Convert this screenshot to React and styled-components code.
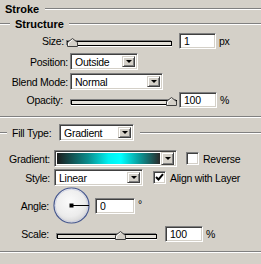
import React from "react";
import styled, { createGlobalStyle } from "styled-components";

const GlobalStyle = createGlobalStyle`
  html, body {
    margin: 0;
    padding: 0;
    background: #d4d0c8;
  }
  body {
    font-family: "Liberation Sans", Arial, sans-serif;
    font-size: 10.5px;
    letter-spacing: -0.25px;
    color: #000;
  }
`;

const Panel = styled.div`
  width: 261px;
  height: 264px;
  background: #d4d0c8;
  overflow: hidden;
  display: flex;
  flex-direction: column;
`;

// etched line used inside a heading row
const Etch = styled.div`
  height: 0;
  border-top: 1px solid #808080;
  border-bottom: 1px solid #ffffff;
  flex: ${(p) => (p.$w ? `0 0 ${p.$w}px` : "1 1 auto")};
  margin-left: ${(p) => p.$ml || 0}px;
`;

const Separator = styled.div`
  height: 0;
  border-top: 1px solid #808080;
  border-bottom: 1px solid #ffffff;
  margin-top: ${(p) => p.$mt || 0}px;
`;

const Heading = styled.div`
  display: flex;
  align-items: center;
  height: ${(p) => p.$h}px;
  padding-left: ${(p) => p.$pl || 0}px;
  flex: none;
`;

const HeadText = styled.span`
  font-weight: bold;
  font-size: 11px;
  letter-spacing: 0;
  margin-left: ${(p) => p.$ml || 0}px;
  white-space: nowrap;
`;

const Row = styled.div`
  display: flex;
  align-items: center;
  height: ${(p) => p.$h || 17}px;
  margin-top: ${(p) => p.$mt || 0}px;
  flex: none;
`;

const Label = styled.span`
  flex: none;
  width: ${(p) => p.$w}px;
  margin-left: ${(p) => p.$ml || 0}px;
  margin-right: ${(p) => p.$gap ?? 3}px;
  text-align: ${(p) => p.$align || "right"};
  white-space: nowrap;
`;

const Unit = styled.span`
  margin-left: ${(p) => p.$ml || 3}px;
  align-self: ${(p) => (p.$top ? "flex-start" : "center")};
  margin-top: ${(p) => (p.$top ? 11 : 0)}px;
  white-space: nowrap;
`;

const Field = styled.div`
  box-sizing: border-box;
  flex: none;
  width: ${(p) => p.$w}px;
  height: ${(p) => p.$h || 17}px;
  margin-left: ${(p) => p.$ml || 0}px;
  background: #ffffff;
  border: 1px solid;
  border-color: #808080 #ffffff #ffffff #808080;
  box-shadow: inset 1px 1px 0 #404040, inset -1px -1px 0 #d4d0c8;
  display: flex;
  align-items: center;
  padding: ${(p) => (p.$flat ? "2px" : "0 2px 0 4px")};
`;

const FieldText = styled.span`
  flex: 1;
  white-space: nowrap;
  overflow: hidden;
`;

const ArrowButton = styled.span`
  flex: none;
  box-sizing: border-box;
  width: 13px;
  height: ${(p) => p.$h || 11}px;
  background: #d4d0c8;
  border: 1px solid;
  border-color: #d4d0c8 #404040 #404040 #d4d0c8;
  box-shadow: inset 1px 1px 0 #ffffff, inset -1px -1px 0 #808080;
  display: flex;
  align-items: center;
  justify-content: center;

  &::after {
    content: "";
    border-left: 3px solid transparent;
    border-right: 3px solid transparent;
    border-top: 3px solid #000;
  }
`;

const GradientBar = styled.div`
  flex: 1;
  height: 100%;
  margin-right: 1px;
  background: linear-gradient(
    90deg,
    #1c1c1c 0%,
    #0a8c8c 30%,
    #00f0f0 50%,
    #00ffff 62%,
    #0a9a9a 80%,
    #2a2a2a 100%
  );
`;

const Slider = styled.div`
  position: relative;
  flex: none;
  width: ${(p) => p.$w}px;
  height: 14px;
  margin-left: ${(p) => p.$ml || 0}px;
  display: flex;
  flex-direction: column;
  justify-content: flex-end;
  padding-bottom: 2px;
  box-sizing: border-box;
`;

const Track = styled.div`
  height: 5px;
  box-sizing: border-box;
  border: 1px solid #000;
  background: #e4e1da;
  box-shadow: 0 1px 0 #ffffff, -1px -1px 0 #808080;
`;

const Thumb = styled.svg`
  position: absolute;
  bottom: 1px;
  left: ${(p) => p.$left}px;
`;

const Check = styled.div`
  box-sizing: border-box;
  flex: none;
  width: 13px;
  height: 13px;
  margin-left: ${(p) => p.$ml || 0}px;
  margin-right: 4px;
  background: #ffffff;
  border: 1px solid;
  border-color: #808080 #ffffff #ffffff #808080;
  box-shadow: inset 1px 1px 0 #404040, inset -1px -1px 0 #d4d0c8;
  display: flex;
  align-items: center;
  justify-content: center;
`;

const Dial = styled.svg`
  flex: none;
`;

const SliderThumb = ({ left }) => (
  <Thumb $left={left} width="11" height="9" viewBox="0 0 11 9">
    <polygon points="0.5,8.5 0.5,4.5 5.5,0.5 10.5,4.5 10.5,8.5" fill="#d4d0c8" stroke="#404040" />
    <polyline points="1.5,7.5 1.5,5 5.5,1.8" fill="none" stroke="#ffffff" />
  </Thumb>
);

const Select = ({ w, value, ml }) => (
  <Field $w={w} $ml={ml}>
    <FieldText>{value}</FieldText>
    <ArrowButton />
  </Field>
);

const CheckBox = ({ checked, ml }) => (
  <Check $ml={ml}>
    {checked && (
      <svg width="9" height="9" viewBox="0 0 9 9">
        <path d="M1 4 L3.5 6.5 L8 1.2" fill="none" stroke="#000" strokeWidth="2" />
      </svg>
    )}
  </Check>
);

export default function App() {
  return (
    <>
      <GlobalStyle />
      <Panel>
        <Heading $h={18} $pl={5}>
          <HeadText>Stroke</HeadText>
          <Etch $ml={6} />
        </Heading>
        <Heading $h={12}>
          <Etch $w={10} />
          <HeadText $ml={5}>Structure</HeadText>
          <Etch $ml={5} />
        </Heading>

        <Row $mt={3} $h={16}>
          <Label $w={64}>Size:</Label>
          <Slider $w={105}>
            <Track />
            <SliderThumb left={0} />
          </Slider>
          <Field $w={37} $h={16} $ml={7}>
            <FieldText>1</FieldText>
          </Field>
          <Unit>px</Unit>
        </Row>
        <Row $mt={4}>
          <Label $w={68} $gap={2}>Position:</Label>
          <Select w={68} value="Outside" />
        </Row>
        <Row $mt={3}>
          <Label $w={68} $gap={2}>Blend Mode:</Label>
          <Select w={93} value="Normal" />
        </Row>
        <Row $mt={2} $h={16}>
          <Label $w={63} $gap={8}>Opacity:</Label>
          <Slider $w={106}>
            <Track />
            <SliderThumb left={95} />
          </Slider>
          <Field $w={38} $h={16} $ml={2}>
            <FieldText>100</FieldText>
          </Field>
          <Unit>%</Unit>
        </Row>

        <Separator $mt={8} />

        <Row $mt={6}>
          <Etch $w={7} />
          <Label $w={47} $ml={5} $gap={0} $align="left">Fill Type:</Label>
          <Select w={75} value="Gradient" />
          <Etch $ml={6} />
        </Row>
        <Row $mt={9}>
          <Label $w={50} $gap={4}>Gradient:</Label>
          <Field $w={123} $flat>
            <GradientBar />
            <ArrowButton $h={13} />
          </Field>
          <CheckBox ml={9} />
          <span>Reverse</span>
        </Row>
        <Row $mt={2}>
          <Label $w={50} $gap={4}>Style:</Label>
          <Select w={89} value="Linear" />
          <CheckBox checked ml={10} />
          <span>Align with Layer</span>
        </Row>
        <Row $mt={1} $h={37}>
          <Label $w={49} $gap={4}>Angle:</Label>
          <Dial width="37" height="37" viewBox="0 0 37 37">
            <defs>
              <radialGradient id="dialFill" cx="45%" cy="40%" r="60%">
                <stop offset="0%" stopColor="#fbfbfb" />
                <stop offset="70%" stopColor="#ececec" />
                <stop offset="100%" stopColor="#d6d6d6" />
              </radialGradient>
            </defs>
            <circle cx="18.5" cy="18.5" r="17.5" fill="url(#dialFill)" stroke="#44568e" strokeWidth="1.2" />
            <circle cx="18.5" cy="18.5" r="16.3" fill="none" stroke="#c9cde0" strokeWidth="0.8" />
            <line x1="18.5" y1="18.5" x2="36" y2="18.5" stroke="#000" strokeWidth="1" />
            <rect x="16.5" y="16.5" width="4" height="4" fill="#000" />
          </Dial>
          <Field $w={40} $h={16} $ml={5}>
            <FieldText>0</FieldText>
          </Field>
          <Unit $top>°</Unit>
        </Row>
        <Row $mt={2} $h={16}>
          <Label $w={49} $gap={8}>Scale:</Label>
          <Slider $w={100}>
            <Track />
            <SliderThumb left={58} />
          </Slider>
          <Field $w={38} $h={16} $ml={8}>
            <FieldText>100</FieldText>
          </Field>
          <Unit>%</Unit>
        </Row>

        <Separator $mt={9} />
      </Panel>
    </>
  );
}
